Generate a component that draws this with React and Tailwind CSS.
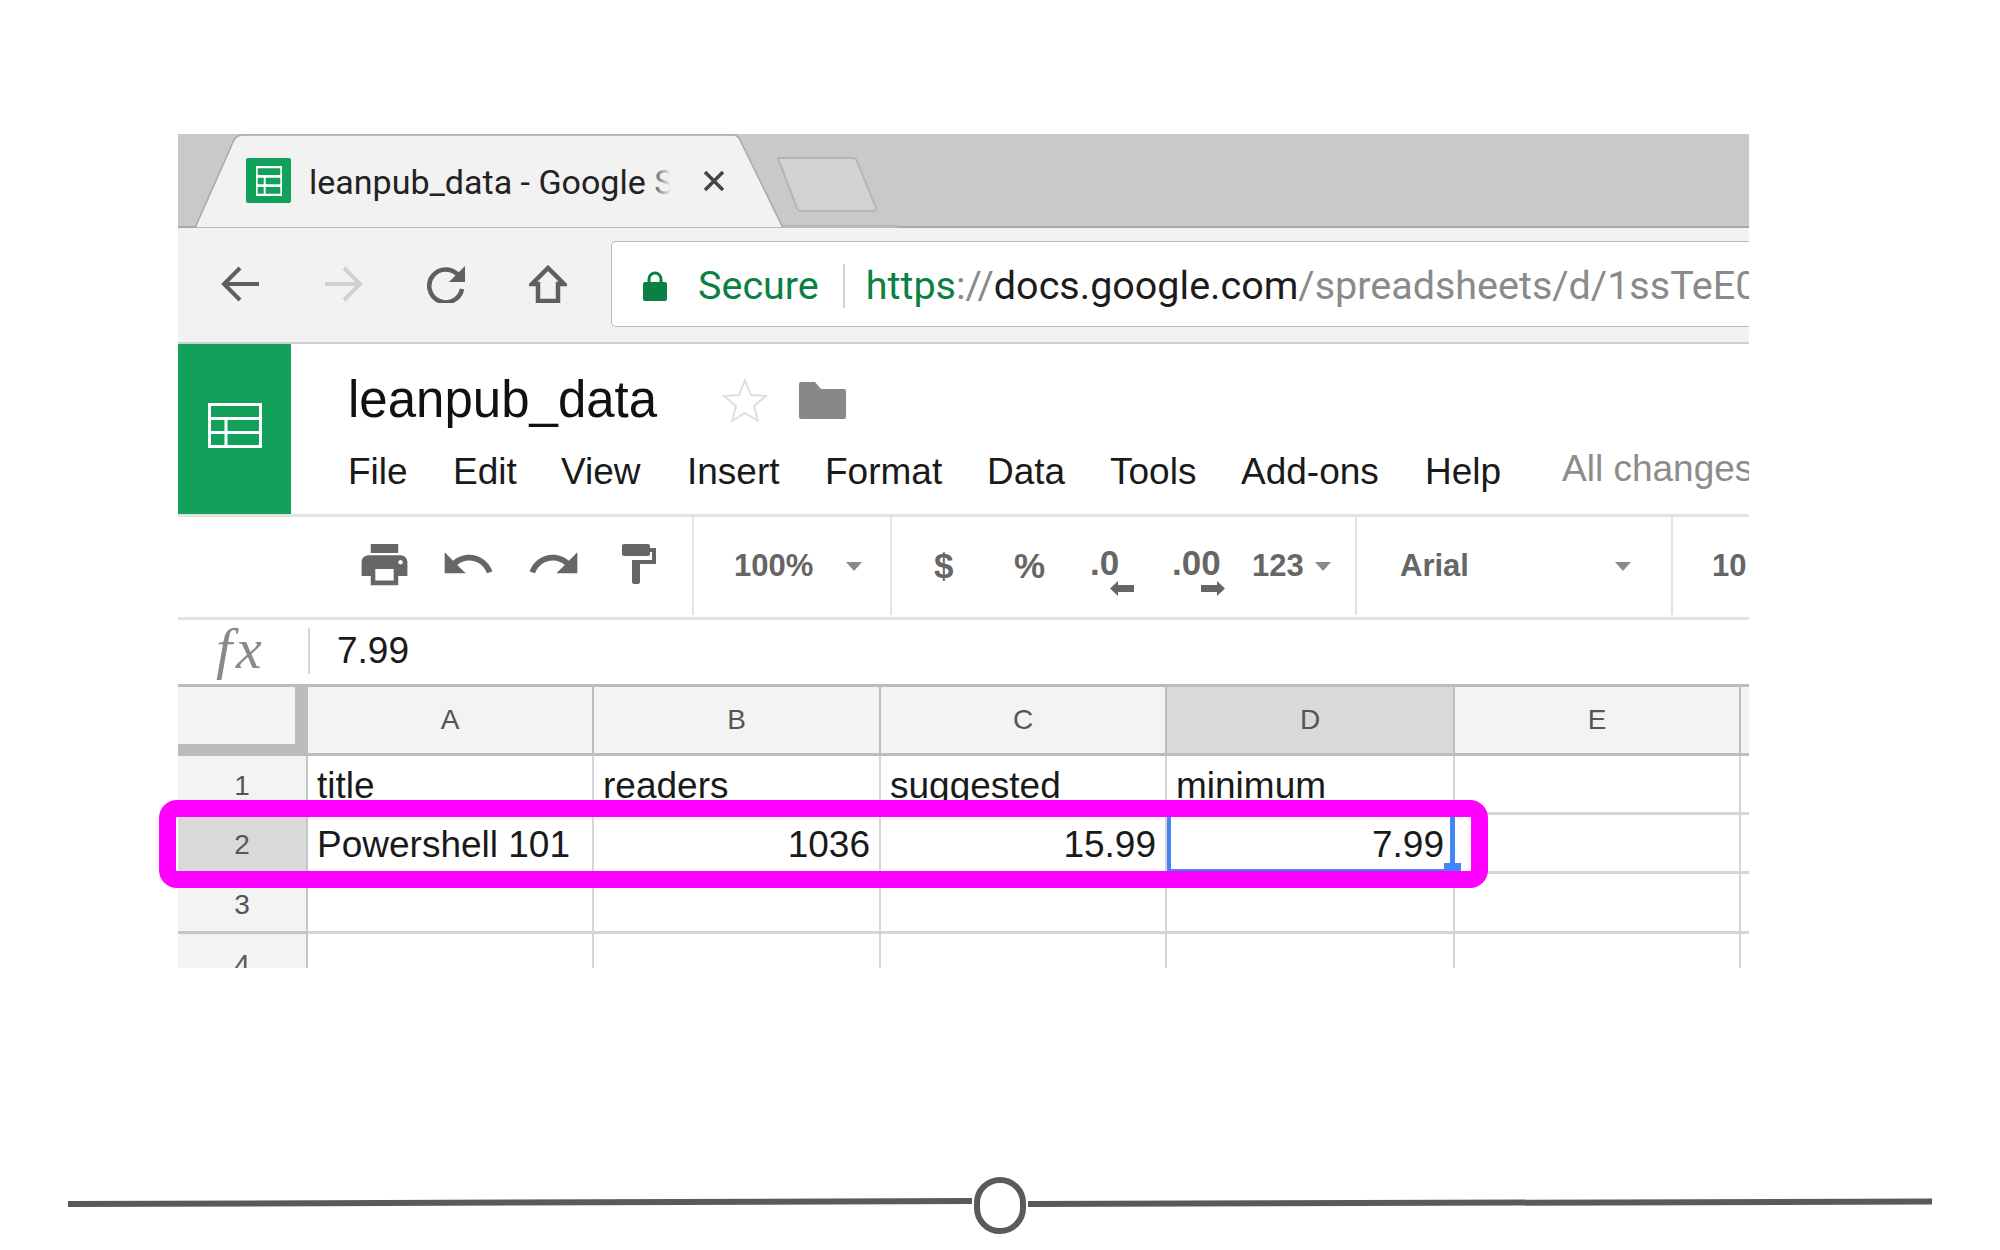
import React from "react";
import { MdPrint, MdUndo, MdRedo, MdFormatPaint } from "react-icons/md";

const menus = [
  ["File", "w-[105px]"],
  ["Edit", "w-[108px]"],
  ["View", "w-[126px]"],
  ["Insert", "w-[138px]"],
  ["Format", "w-[162px]"],
  ["Data", "w-[123px]"],
  ["Tools", "w-[131px]"],
  ["Add-ons", "w-[184px]"],
  ["Help", "w-[137px]"],
];

const Caret = ({ className }) => (
  <svg width="16" height="9" viewBox="0 0 16 9" className={className}>
    <path d="M0 0h16L8 9z" fill="#8a8a8a" />
  </svg>
);

const SheetGrid = ({ width, height, color, sw = 3 }) => (
  <svg width={width} height={height} viewBox="0 0 54 45" fill="none" stroke={color} strokeWidth={sw} preserveAspectRatio="none">
    <path d="M1.5 1.5h51v42h-51zM1.5 15.5h51M1.5 29.5h51M18 15.5v28" />
  </svg>
);

// one grid row: header cell + columns
const Row = ({ num, cells, selected, height }) => (
  <>
    <div className={`flex justify-center items-center pt-1 text-[28px] text-[#555] border-r-2 border-b-[3px] border-[#c6c6c6] ${selected ? "bg-[#d9d9d9]" : "bg-[#f3f3f3]"} ${height}`}>
      {num}
    </div>
    {cells.map((c, i) => (
      <div
        key={i}
        className={`flex items-center pt-1 px-[9px] text-[37px] text-[#1a1a1a] border-b-[3px] border-[#d6d6d6] overflow-hidden whitespace-nowrap ${i < 5 ? "border-r-2" : ""} ${height} ${c.right ? "justify-end" : ""}`}
      >
        {c.text}
      </div>
    ))}
  </>
);

const App = () => {
  return (
    <div className="relative w-[2000px] h-[1250px] bg-white overflow-hidden font-['Liberation_Sans',sans-serif]">
      <div className="absolute left-[178px] top-[134px] w-[1571px]">
        {/* tab strip */}
        <div className="relative h-[94px] bg-[#c9c9c9] border-b-2 border-[#a8a8a8]">
          <svg className="absolute left-0 top-0" width="720" height="94" viewBox="0 0 720 94">
            <path d="M17 94 L56 6 Q59 1 65 1 H555 Q560 1 562 6 L604 92 H720 V94 Z" fill="#f2f2f2" stroke="#a8a8a8" strokeWidth="1.5" />
            <path d="M0 93 H17" stroke="#a8a8a8" strokeWidth="2" />
            <path d="M600 24 H675 Q678 24 679 27 L698 74 Q699 77 695 77 H623 Q620 77 619 74 Z" fill="#d2d2d2" stroke="#b5b5b5" strokeWidth="2" />
          </svg>
          <div className="relative flex items-center h-full pl-[68px] pt-[1px]">
            <div className="w-[45px] h-[45px] bg-[#12a15a] rounded-[2px] flex items-center justify-center">
              <SheetGrid width={26} height={30} color="#fff" sw={4} />
            </div>
            <div className="relative ml-[18px] w-[362px] pt-[3px] overflow-hidden whitespace-nowrap font-['Roboto',sans-serif] text-[34px] text-[#222]">
              leanpub_data - Google S
              <div className="absolute right-0 top-0 bottom-0 w-[24px] bg-gradient-to-r from-transparent to-[#f2f2f2]"></div>
            </div>
            <svg className="ml-[32px]" width="22" height="22" viewBox="0 0 22 22" stroke="#444" strokeWidth="3.4">
              <path d="M2 2l18 18M20 2L2 20" />
            </svg>
          </div>
        </div>

        {/* address toolbar */}
        <div className="flex items-center h-[116px] pb-[2px] bg-[#f2f2f2] border-b-2 border-[#cfcfcf]">
          <svg className="ml-[43px]" width="38" height="36" viewBox="0 0 38 36" fill="none" stroke="#5f5f5f" strokeWidth="4">
            <path d="M38 18H3M19 2L3 18l16 16" />
          </svg>
          <svg className="ml-[66px]" width="38" height="36" viewBox="0 0 38 36" fill="none" stroke="#d0d0d0" strokeWidth="4">
            <path d="M0 18h35M19 2l16 16-16 16" />
          </svg>
          <svg className="ml-[64px]" width="40" height="38" viewBox="0 0 40 38" fill="none">
            <path d="M32 11A16.5 16.5 0 1 0 35 24" stroke="#5f5f5f" strokeWidth="4.5" />
            <path d="M38 1v16H22z" fill="#5f5f5f" />
          </svg>
          <svg className="ml-[62px]" width="38" height="38" viewBox="0 0 38 38" fill="none" stroke="#5f5f5f" strokeWidth="4.5">
            <path d="M3 19L19 3l16 16h-6v17H9V19z" />
          </svg>
          <div className="ml-[44px] flex-1 flex items-center h-[86px] pt-[3px] bg-white border border-r-0 border-[#b9b9b9] rounded-l-[5px] overflow-hidden whitespace-nowrap font-['Roboto',sans-serif] text-[39.5px]">
            <svg className="ml-[31px] shrink-0" width="24" height="30" viewBox="0 0 24 30">
              <path d="M6 12V8a6 6 0 0 1 12 0v4" fill="none" stroke="#0b8043" strokeWidth="3" />
              <rect x="0" y="11" width="24" height="19" rx="2" fill="#0b8043" />
            </svg>
            <span className="ml-[31px] text-[#0b8043]">Secure</span>
            <div className="ml-[24px] w-[2px] h-[44px] bg-[#d0d0d0] shrink-0"></div>
            <span className="ml-[21px] text-[#0b8043]">https</span>
            <span className="text-[#8a8a8a]">://</span>
            <span className="text-[#1c1c1c]">docs.google.com</span>
            <span className="text-[#8a8a8a]">/spreadsheets/d/1ssTeE0</span>
          </div>
        </div>

        {/* sheets header */}
        <div className="flex h-[173px] border-b-[3px] border-[#e2e2e2]">
          <div className="w-[113px] shrink-0 pb-[8px] bg-[#12a15a] flex items-center justify-center">
            <SheetGrid width={54} height={45} color="#fff" />
          </div>
          <div className="flex-1 pl-[57px] overflow-hidden">
            <div className="flex items-center h-[94px] pt-[18px]">
              <span className="text-[51px] text-[#111] w-[374px] shrink-0">leanpub_data</span>
              <svg width="46" height="44" viewBox="0 0 46 44" fill="none" stroke="#dedede" strokeWidth="2">
                <path d="M23 2l6 15 15 1-12 10 4 15-13-8-13 8 4-15L2 18l15-1z" />
              </svg>
              <svg className="ml-[31px]" width="47" height="37" viewBox="0 0 47 37">
                <path d="M0 2a2 2 0 0 1 2-2h14l6 7h23a2 2 0 0 1 2 2v26a2 2 0 0 1-2 2H2a2 2 0 0 1-2-2z" fill="#888" />
              </svg>
            </div>
            <div className="flex items-center h-[50px] mt-[9px] text-[37px] text-[#1a1a1a] whitespace-nowrap">
              {menus.map(([label, w]) => (
                <span key={label} className={`${w} shrink-0`}>{label}</span>
              ))}
              <span className="text-[#8c8c8c] mb-[6px] shrink-0">All changes saved</span>
            </div>
          </div>
        </div>

        {/* formatting toolbar */}
        <div className="flex h-[103px] pb-[2px] border-b-[3px] border-[#e2e2e2] text-[31px] font-bold text-[#666] whitespace-nowrap overflow-hidden">
          <div className="flex items-center w-[516px] shrink-0 pl-[179px] pb-[4px] border-r-2 border-[#e2e2e2] text-[#666]">
            <MdPrint size={55} />
            <MdUndo size={56} className="ml-[28px]" />
            <MdRedo size={56} className="ml-[30px]" />
            <MdFormatPaint size={48} className="ml-[32px]" />
          </div>
          <div className="flex items-center w-[198px] shrink-0 pl-[40px] border-r-2 border-[#e2e2e2]">
            <span>100%</span>
            <Caret className="ml-[33px]" />
          </div>
          <div className="flex items-center w-[465px] shrink-0 pl-[42px] border-r-2 border-[#e2e2e2]">
            <span className="w-[80px] shrink-0 text-[35px]">$</span>
            <span className="w-[76px] shrink-0 text-[35px]">%</span>
            <div className="relative w-[82px] shrink-0 text-[35px] -mt-[6px]">
              <span>.0</span>
              <svg className="absolute left-[20px] top-[44px]" width="24" height="15" viewBox="0 0 24 15">
                <path d="M0 7.5L8 0v4h16v7H8v4z" fill="#666" />
              </svg>
            </div>
            <div className="relative w-[80px] shrink-0 text-[35px] -mt-[6px]">
              <span>.00</span>
              <svg className="absolute left-[29px] top-[44px]" width="24" height="15" viewBox="0 0 24 15">
                <path d="M24 7.5L16 0v4H0v7h16v4z" fill="#666" />
              </svg>
            </div>
            <span>123</span>
            <Caret className="ml-[11px]" />
          </div>
          <div className="flex items-center w-[316px] shrink-0 pl-[43px] border-r-2 border-[#e2e2e2]">
            <span className="w-[215px] shrink-0">Arial</span>
            <Caret />
          </div>
          <div className="flex items-center pl-[39px]">10</div>
        </div>

        {/* formula bar */}
        <div className="flex items-center h-[67px] pb-[3px] border-b-[3px] border-[#bcbcbc]">
          <div className="w-[130px] shrink-0 pl-[38px] pb-[4px] font-['Liberation_Serif',serif] italic text-[58px] tracking-[4px] leading-none text-[#8a8a8a]">fx</div>
          <div className="w-[2px] h-[46px] bg-[#d5d5d5]"></div>
          <div className="ml-[27px] text-[37px] text-[#1a1a1a]">7.99</div>
        </div>

        {/* grid */}
        <div className="h-[281px] overflow-hidden grid grid-cols-[130px_286px_287px_286px_288px_286px_8px] content-start">
          <div className="h-[69px] bg-[#f3f3f3] border-r-[13px] border-b-[12px] border-[#bcbcbc]"></div>
          {["A", "B", "C", "D", "E", ""].map((h) => (
            <div
              key={h}
              className={`h-[69px] flex items-center justify-center text-[28px] text-[#555] border-b-[3px] border-[#bdbdbd] ${h === "" ? "" : "border-r-2"} ${h === "D" ? "bg-[#d9d9d9]" : "bg-[#f3f3f3]"}`}
            >
              {h}
            </div>
          ))}
          <Row
            num="1"
            height="h-[59px]"
            cells={[{ text: "title" }, { text: "readers" }, { text: "suggested" }, { text: "minimum" }, { text: "" }, { text: "" }]}
          />
          <Row
            num="2"
            selected
            height="h-[59px]"
            cells={[
              { text: "Powershell 101" },
              { text: "1036", right: true },
              { text: "15.99", right: true },
              { text: "7.99", right: true },
              { text: "" },
              { text: "" },
            ]}
          />
          <Row num="3" height="h-[60px]" cells={[{}, {}, {}, {}, {}, {}]} />
          <Row num="4" height="h-[60px]" cells={[{}, {}, {}, {}, {}, {}]} />
        </div>

        {/* selected cell */}
        <div className="absolute left-[989px] top-[679px] w-[288px] h-[60px] border-4 border-r-[5px] border-[#4285f4] pointer-events-none"></div>
        <div className="absolute left-[1266px] top-[729px] w-[17px] h-[10px] bg-[#4285f4]"></div>
      </div>

      {/* highlight ring */}
      <div className="absolute left-[159px] top-[800px] w-[1329px] h-[88px] border-[17px] border-[#ff00ff] rounded-[18px] pointer-events-none"></div>

      {/* slider */}
      <div className="absolute left-[68px] top-[1177px] w-[1864px] flex items-center">
        <svg width="904" height="57" viewBox="0 0 904 57">
          <path d="M0 27L904 24" stroke="#5a5a5a" strokeWidth="6" />
        </svg>
        <div className="ml-[2px] w-[52px] h-[57px] rounded-full border-[6px] border-[#5a5a5a] bg-white"></div>
        <svg className="ml-[2px]" width="904" height="57" viewBox="0 0 904 57">
          <path d="M0 27L904 24.5" stroke="#5a5a5a" strokeWidth="6" />
        </svg>
      </div>
    </div>
  );
};

export default App;
